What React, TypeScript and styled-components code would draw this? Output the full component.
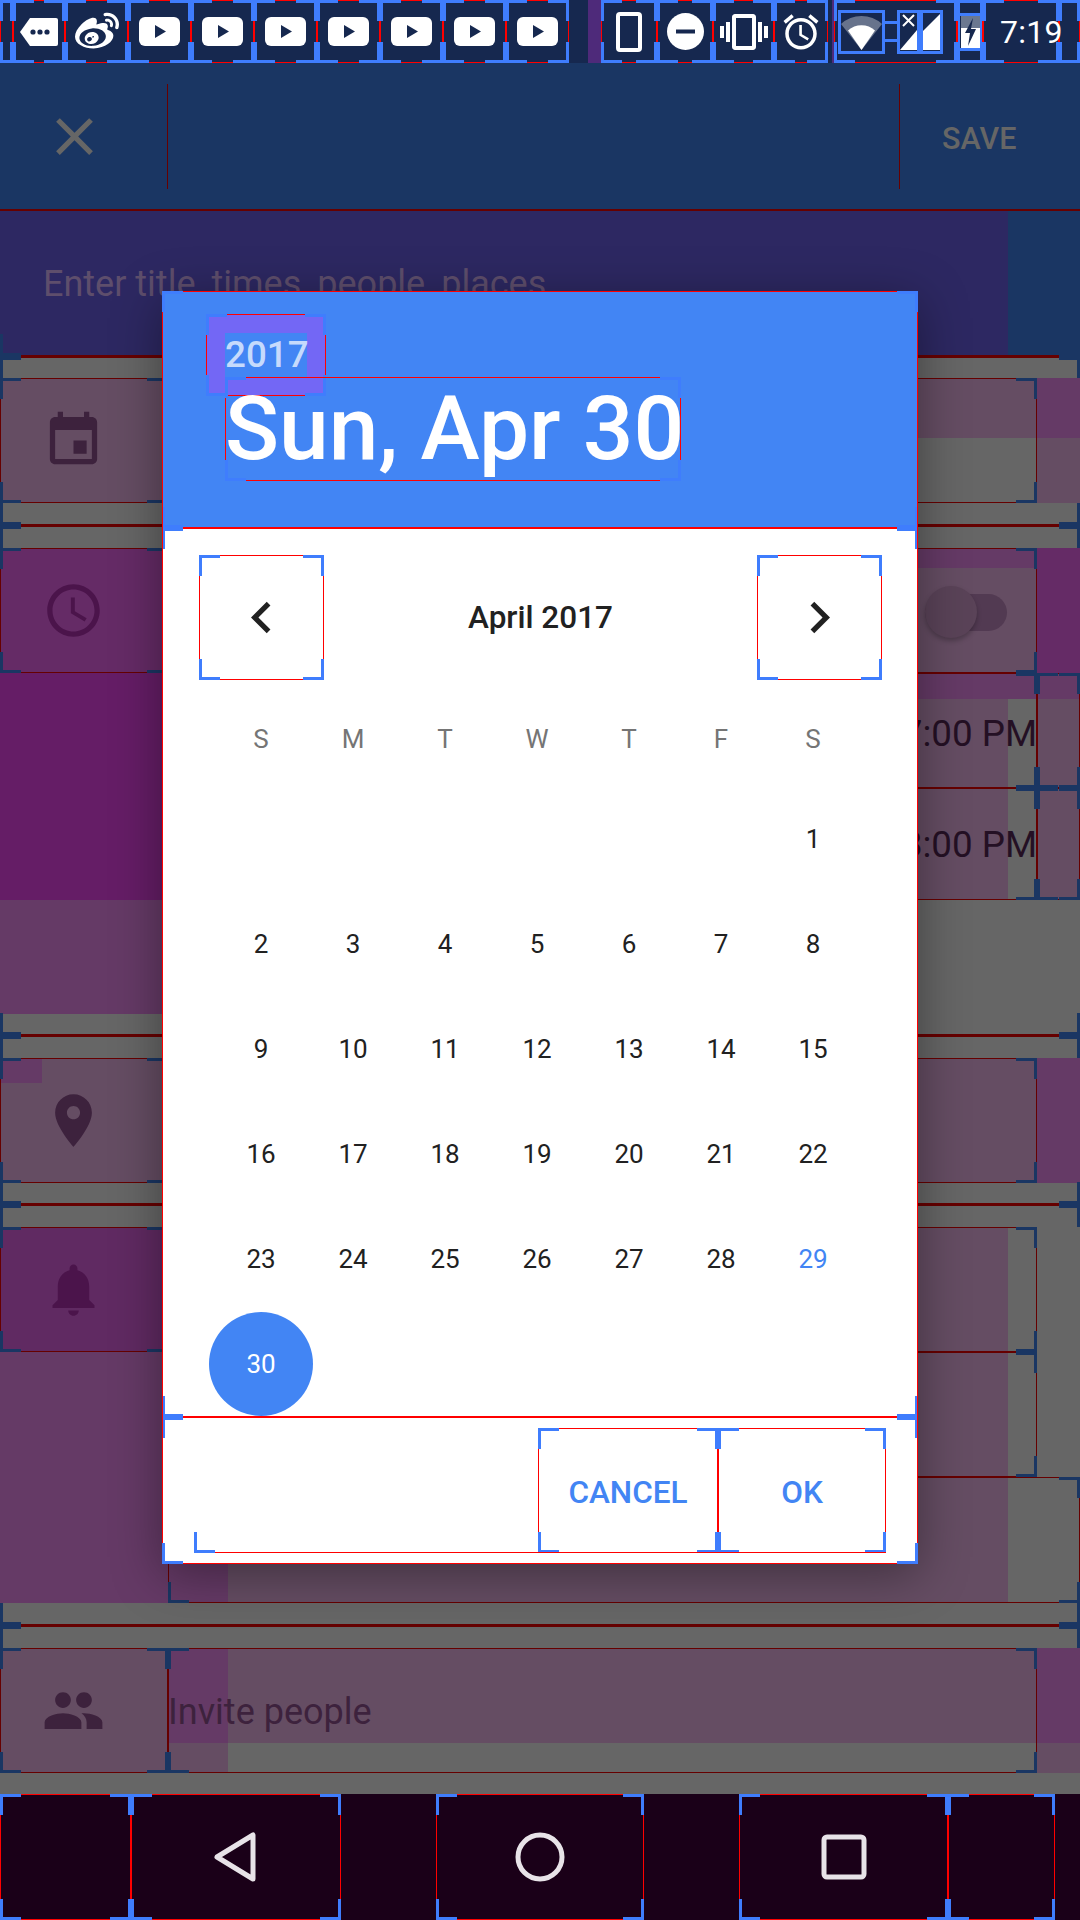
import * as React from 'react';
import styled, { createGlobalStyle, css } from 'styled-components';
import { FaWeibo } from 'react-icons/fa';

const BLUE = '#4285f4';
const PINK = '#654d63';
const PLUM = '#653a66';
const VIOLET = '#652b66';
const DEEP = '#651d66';
const GREY = '#666666';
const INK = '#3d223d';
const NAVY = '#1a3663';
const DARK_RED = '#660000';

const WEEK = ['S', 'M', 'T', 'W', 'T', 'F', 'S'];
const DAYS = Array.from({ length: 36 }, (_, i) => (i < 6 ? 0 : i - 5));

const PATHS = {
  event: 'M17 12h-5v5h5v-5zM16 1v2H8V1H6v2H5c-1.11 0-1.99.9-1.99 2L3 19c0 1.1.89 2 2 2h14c1.1 0 2-.9 2-2V5c0-1.1-.9-2-2-2h-1V1h-2zm3 18H5V8h14v11z',
  clock: 'M11.99 2C6.47 2 2 6.48 2 12s4.47 10 9.99 10C17.52 22 22 17.52 22 12S17.52 2 11.99 2zM12 20c-4.42 0-8-3.58-8-8s3.58-8 8-8 8 3.58 8 8-3.58 8-8 8zm.5-13H11v6l5.25 3.15.75-1.23-4.5-2.67z',
  place: 'M12 2C8.13 2 5 5.13 5 9c0 5.25 7 13 7 13s7-7.75 7-13c0-3.87-3.13-7-7-7zm0 9.5c-1.38 0-2.5-1.12-2.5-2.5s1.12-2.5 2.5-2.5 2.5 1.12 2.5 2.5-1.12 2.5-2.5 2.5z',
  bell: 'M12 22c1.1 0 2-.9 2-2h-4c0 1.1.89 2 2 2zm6-6v-5c0-3.07-1.64-5.64-4.5-6.32V4c0-.83-.67-1.5-1.5-1.5s-1.5.67-1.5 1.5v.68C7.63 5.36 6 7.92 6 11v5l-2 2v1h16v-1l-2-2z',
  people: 'M16 11c1.66 0 2.99-1.34 2.99-3S17.66 5 16 5c-1.66 0-3 1.34-3 3s1.34 3 3 3zm-8 0c1.66 0 2.99-1.34 2.99-3S9.66 5 8 5C6.34 5 5 6.34 5 8s1.34 3 3 3zm0 2c-2.33 0-7 1.17-7 3.5V19h14v-2.5c0-2.33-4.67-3.5-7-3.5zm8 0c-.29 0-.62.02-.97.05 1.16.84 1.97 1.97 1.97 3.45V19h6v-2.5c0-2.33-4.67-3.5-7-3.5z',
  close: 'M19 6.41L17.59 5 12 10.59 6.41 5 5 6.41 10.59 12 5 17.59 6.41 19 12 13.41 17.59 19 19 17.59 13.41 12z',
  left: 'M15.41 7.41L14 6l-6 6 6 6 1.41-1.41L10.83 12z',
  right: 'M8.59 16.59L10 18l6-6-6-6-1.41 1.41L13.17 12z',
  vibrate: 'M0 15h2V9H0v6zm3 2h2V7H3v10zm19-8v6h2V9h-2zm-3 8h2V7h-2v10zM16.5 3h-9C6.67 3 6 3.67 6 4.5v15c0 .83.67 1.5 1.5 1.5h9c.83 0 1.5-.67 1.5-1.5v-15c0-.83-.67-1.5-1.5-1.5zM16 19H8V5h8v14z',
  alarm: 'M22 5.72l-4.6-3.86-1.29 1.53 4.6 3.86L22 5.72zM7.88 3.39L6.6 1.86 2 5.71l1.29 1.53 4.59-3.85zM12.5 8H11v6l4.75 2.85.75-1.23-4-2.37V8zM12 4c-4.97 0-9 4.03-9 9s4.03 9 9 9 9-4.03 9-9-4.03-9-9-9zm0 16c-3.87 0-7-3.13-7-7s3.13-7 7-7 7 3.13 7 7-3.13 7-7 7z',
};

const Icon = ({ name, size, color }: { name: keyof typeof PATHS; size: number; color: string }) => (
  <svg width={size} height={size} viewBox="0 0 24 24" fill={color}>
    <path d={PATHS[name]} />
  </svg>
);

// layout bound marks from the "show layout bounds" developer option
const marks = (c: string, line: string, l = 21, t = 3) => {
  const m = `linear-gradient(${c}, ${c})`;
  const r = `linear-gradient(${line}, ${line})`;
  return css`
    background-image: ${m}, ${m}, ${m}, ${m}, ${m}, ${m}, ${m}, ${m}, ${r}, ${r}, ${r}, ${r};
    background-repeat: no-repeat;
    background-size: ${l}px ${t}px, ${t}px ${l}px, ${l}px ${t}px, ${t}px ${l}px, ${l}px ${t}px, ${t}px ${l}px,
      ${l}px ${t}px, ${t}px ${l}px, 100% 1px, 100% 1px, 1px 100%, 1px 100%;
    background-position: 0 0, 0 0, 100% 0, 100% 0, 0 100%, 0 100%, 100% 100%, 100% 100%, 0 0, 0 100%, 0 0, 100% 0;
  `;
};

const Bounds = styled.div<{ $dim?: boolean; $fill?: string }>`
  position: relative;
  ${(p) => p.$fill && `background: ${p.$fill};`}

  &::after {
    content: '';
    position: absolute;
    inset: 0;
    pointer-events: none;
    ${(p) => (p.$dim ? marks(NAVY, DARK_RED) : marks('#3f7dfd', '#ff0000'))}
  }
`;

const GlobalStyle = createGlobalStyle`
  html, body {
    margin: 0;
    padding: 0;
    background: #666;
  }
  body {
    font-family: Roboto, "Liberation Sans", sans-serif;
  }
`;

const Page = styled.div`
  position: relative;
  width: 1080px;
  height: 1920px;
  overflow: hidden;
  display: flex;
  flex-direction: column;
  background: ${GREY};
`;

const StatusBar = styled.div`
  height: 63px;
  flex: none;
  display: flex;
  background: #16284f;
`;

const StatusCell = styled(Bounds)<{ $w: number; $pad?: number }>`
  width: ${(p) => p.$w}px;
  height: 63px;
  flex: none;
  display: flex;
  align-items: center;
  justify-content: ${(p) => (p.$pad ? 'flex-start' : 'center')};
  padding-left: ${(p) => p.$pad ?? 0}px;
  box-sizing: border-box;
`;

const Sliver = styled.div<{ $w: number }>`
  width: ${(p) => p.$w}px;
  flex: none;
  background: linear-gradient(90deg, #16284f 60%, #4e2a7a 60%);
`;

const SystemGroup = styled(Bounds)`
  width: 123px;
  height: 63px;
  flex: none;
  display: flex;
  align-items: center;
  padding-left: 4px;
  box-sizing: border-box;
`;

const BoxedIcon = styled.div<{ $w: number; $h?: number }>`
  width: ${(p) => p.$w}px;
  height: ${(p) => p.$h ?? 44}px;
  flex: none;
  box-sizing: border-box;
  border: 3px solid #3f7dfd;
  display: flex;
  align-items: center;
  justify-content: center;
`;

const BoxLink = styled.div`
  width: 12px;
  height: 15px;
  flex: none;
  border-top: 3px solid #3f7dfd;
  border-bottom: 3px solid #3f7dfd;
`;

const Clock = styled.span`
  position: relative;
  z-index: 1;
  font-size: 32px;
  font-weight: 400;
  color: #fff;
  letter-spacing: 0.3px;
`;

const Toolbar = styled.div`
  height: 148px;
  flex: none;
  display: flex;
  align-items: center;
  background: ${NAVY};
  border-bottom: 2px solid ${DARK_RED};
  box-sizing: border-box;
`;

const CloseButton = styled.div`
  width: 167px;
  display: flex;
  justify-content: center;
  padding-right: 19px;
  box-sizing: border-box;
`;

const TitleField = styled(Bounds)`
  flex: 1;
  height: 105px;

  &::after {
    background: linear-gradient(${DARK_RED}, ${DARK_RED}) 0 0 / 1px 100% no-repeat,
      linear-gradient(${DARK_RED}, ${DARK_RED}) 100% 0 / 1px 100% no-repeat;
  }
`;

const SaveButton = styled.div`
  width: 180px;
  padding: 4px 0 0 42px;
  box-sizing: border-box;
  font-size: 30.5px;
  font-weight: 500;
  color: #666;
`;

const TitleBand = styled.div`
  height: 144px;
  flex: none;
  display: flex;
  background: ${NAVY};
`;

const TitleFill = styled.div`
  width: 1008px;
  box-sizing: border-box;
  padding: 50px 0 0 43px;
  background: #2d2862;
  font-size: 36px;
  line-height: 46px;
  color: #5e4e6c;
`;

const Section = styled.div<{ $pad?: number }>`
  display: flex;
  flex-direction: column;
  flex: none;
  padding-top: ${(p) => p.$pad ?? 21}px;
  position: relative;
`;

const Divider = styled.div`
  height: 3px;
  flex: none;
  position: relative;
  background: ${DARK_RED};

  &::before,
  &::after {
    content: '';
    position: absolute;
    top: -21px;
    width: 21px;
    height: 45px;
    background-repeat: no-repeat;
    background-image: linear-gradient(${NAVY}, ${NAVY}), linear-gradient(${NAVY}, ${NAVY});
    background-size: 100% 7px, 3px 100%;
  }
  &::before {
    left: 0;
    background-position: 0 19px, 0 0;
  }
  &::after {
    right: 0;
    background-position: 0 19px, 100% 0;
  }
`;

const Row = styled.div<{ $h?: number }>`
  display: grid;
  grid-template-columns: 168px 869px 43px;
  height: ${(p) => p.$h ?? 125}px;
`;

const Spacer = styled.div<{ $h: number }>`
  height: ${(p) => p.$h}px;
  flex: none;
`;

const IconCell = styled(Bounds)`
  display: flex;
  align-items: center;
  justify-content: center;
  padding-right: 21px;
`;

const Patch = styled.div`
  position: absolute;
  left: 0;
  top: 0;
  width: 42px;
  height: 25px;
  background: ${PLUM};
`;

const Strip = styled.div<{ $fill: string }>`
  background: ${(p) => p.$fill};
`;

const TimeColumn = styled.div`
  display: flex;
  flex-direction: column;
`;

const TimeCell = styled(Bounds)<{ $h: number; $nudge?: number }>`
  height: ${(p) => p.$h}px;
  box-sizing: border-box;
  padding-top: ${(p) => p.$nudge ?? 0}px;
  display: flex;
  align-items: center;
  justify-content: flex-end;
  font-size: 36.75px;
  color: #241024;
`;

const BlankBlock = styled.div<{ $h: number; $fill: string }>`
  height: ${(p) => p.$h}px;
  flex: none;
  background: ${(p) => p.$fill};
`;

const LowerGrid = styled.div`
  display: grid;
  grid-template-columns: 168px 869px 43px;
  grid-template-rows: 125px 126px;
`;

const LowerFill = styled(Bounds)<{ $wide?: boolean }>`
  grid-column: ${(p) => (p.$wide ? '2 / 4' : '2')};
  background: linear-gradient(90deg, ${PLUM} 60px, ${PINK} 60px, ${PINK} 840px, ${GREY} 840px);
`;

const LowerLeft = styled.div`
  grid-row: 1 / 3;
  background: ${PLUM};
`;

const Switch = styled.div`
  position: absolute;
  right: 30px;
  top: 46px;
  width: 82px;
  height: 37px;
  border-radius: 19px;
  background: #523a52;
`;

const Thumb = styled.div`
  position: absolute;
  left: 0;
  top: -8px;
  width: 52px;
  height: 52px;
  border-radius: 50%;
  background: #5a4358;
  box-shadow: 0 3px 5px rgba(0, 0, 0, 0.25);
`;

const InviteText = styled.span`
  position: absolute;
  left: 0;
  top: 44px;
  font-size: 36px;
  line-height: 40px;
  color: ${INK};
`;

const NavBar = styled.div`
  flex: 1;
  display: flex;
  background: #1a0018;
`;

const NavKey = styled(Bounds)<{ $w: number; $ml?: number }>`
  width: ${(p) => p.$w}px;
  margin-left: ${(p) => p.$ml ?? 0}px;
  flex: none;
  display: flex;
  align-items: center;
  justify-content: center;
`;

const Dialog = styled(Bounds)`
  position: absolute;
  left: 162px;
  top: 291px;
  width: 756px;
  height: 1273px;
  display: flex;
  flex-direction: column;
  background: #fff;
  border-radius: 3px;
  box-shadow: 0 10px 50px rgba(0, 0, 0, 0.38);
`;

const Header = styled(Bounds)`
  height: 237px;
  flex: none;
  box-sizing: border-box;
  padding: 23px 0 0 44px;
  background: ${BLUE};
`;

const YearBox = styled(Bounds)`
  width: 120px;
  height: 82px;
  box-sizing: border-box;
  padding: 19px 0 0 19px;
  background: #7367f5;
`;

const YearText = styled.div`
  width: 82px;
  height: 44px;
  background: ${BLUE};
  font-size: 36.75px;
  font-weight: 500;
  line-height: 44px;
  color: #c6dafc;
`;

const DateText = styled(Bounds)`
  width: 456px;
  height: 104px;
  margin: -19px 0 0 19px;
  font-size: 89.25px;
  font-weight: 500;
  line-height: 104px;
  color: #fff;
  white-space: nowrap;
`;

const Body = styled(Bounds)`
  flex: 1;
  box-sizing: border-box;
  padding-top: 27px;
  display: flex;
  flex-direction: column;
`;

const MonthRow = styled.div`
  display: flex;
  align-items: center;
  justify-content: space-between;
  padding: 0 36px 0 37px;
`;

const ArrowButton = styled(Bounds)`
  width: 125px;
  height: 125px;
  display: flex;
  align-items: center;
  justify-content: center;
`;

const MonthTitle = styled.div`
  font-size: 31.5px;
  font-weight: 500;
  color: #212121;
`;

const WeekRow = styled.div`
  display: grid;
  grid-template-columns: repeat(7, 92px);
  height: 106px;
  box-sizing: border-box;
  padding: 12px 0 0 53px;
  align-items: center;
`;

const WeekDay = styled.div`
  text-align: center;
  font-size: 26px;
  color: #757575;
`;

const DayGrid = styled.div`
  display: grid;
  grid-template-columns: repeat(7, 92px);
  grid-auto-rows: 105px;
  padding-left: 53px;
`;

const Day = styled.div<{ $today?: boolean; $selected?: boolean }>`
  display: flex;
  align-items: center;
  justify-content: center;
  font-size: 26px;
  color: ${(p) => (p.$selected ? '#fff' : p.$today ? BLUE : '#212121')};

  ${(p) =>
    p.$selected &&
    css`
      width: 104px;
      height: 104px;
      margin: 1px 0 0 -6px;
      border-radius: 50%;
      background: ${BLUE};
    `}
`;

const Footer = styled(Bounds)`
  height: 147px;
  flex: none;
  box-sizing: border-box;
  padding: 11px 32px;
`;

const ButtonBar = styled(Bounds)`
  height: 125px;
  display: flex;
  justify-content: flex-end;

  &::after {
    background: linear-gradient(#3f7dfd, #3f7dfd) 0 100% / 21px 3px no-repeat,
      linear-gradient(#3f7dfd, #3f7dfd) 0 100% / 3px 21px no-repeat,
      linear-gradient(#ff0000, #ff0000) 0 100% / 100% 1px no-repeat;
  }
`;

const TextButton = styled(Bounds)<{ $w: number }>`
  width: ${(p) => p.$w}px;
  box-sizing: border-box;
  padding-top: 4px;
  display: flex;
  align-items: center;
  justify-content: center;
  font-size: 31.5px;
  font-weight: 500;
  color: ${BLUE};
`;

const YouTube = () => (
  <svg width="41" height="30" viewBox="0 0 41 30">
    <rect x="0" y="0" width="41" height="29" rx="6" fill="#fff" />
    <path d="M16 8l11 6.5-11 6.5z" fill="#16284f" />
  </svg>
);

const ChatTag = () => (
  <svg width="38" height="28" viewBox="0 0 38 28">
    <path d="M10 0h26a2 2 0 0 1 2 2v24a2 2 0 0 1-2 2H10L0 14z" fill="#fff" />
    <circle cx="13" cy="14" r="2.6" fill="#16284f" />
    <circle cx="20" cy="14" r="2.6" fill="#16284f" />
    <circle cx="27" cy="14" r="2.6" fill="#16284f" />
  </svg>
);

const Phone = () => (
  <svg width="26" height="40" viewBox="0 0 26 40">
    <rect x="2" y="2" width="22" height="36" rx="2" fill="none" stroke="#fff" strokeWidth="4" />
  </svg>
);

const DoNotDisturb = () => (
  <svg width="37" height="37" viewBox="0 0 37 37">
    <circle cx="18.5" cy="18.5" r="18.5" fill="#fff" />
    <rect x="9" y="16.5" width="19" height="4" fill="#16284f" />
  </svg>
);

const Wifi = () => (
  <svg width="41" height="37" viewBox="0 0 41 37">
    <path d="M0 11a30 30 0 0 1 41 0L20.5 37z" fill="#fff" fillOpacity="0.35" />
    <path d="M7 17.500a20 20 0 0 1 27 0L20.500 37z" fill="#fff" />
  </svg>
);

const SignalLeft = () => (
  <svg width="17" height="36" viewBox="0 0 17 36">
    <path d="M17 16v20H0z" fill="#fff" />
    <path d="M3 1l11 11M14 1L3 12" stroke="#fff" strokeWidth="2" />
  </svg>
);

const SignalRight = () => (
  <svg width="17" height="36" viewBox="0 0 17 36">
    <path d="M17 0v36H0V17z" fill="#fff" />
  </svg>
);

const Battery = () => (
  <svg width="19" height="32" viewBox="0 0 19 32">
    <rect width="19" height="32" fill="#fff" />
    <rect width="19" height="12" fill="#6b7890" />
    <path d="M12 2L4 17h5l-2 13 8-17h-5z" fill="#16284f" />
  </svg>
);

const NavBack = () => (
  <svg width="48" height="52" viewBox="0 0 48 52">
    <path d="M41 4v44L5 26z" fill="none" stroke="#e8e3e8" strokeWidth="5" strokeLinejoin="round" />
  </svg>
);

const NavHome = () => (
  <svg width="52" height="52" viewBox="0 0 52 52">
    <circle cx="26" cy="26" r="22" fill="none" stroke="#e8e3e8" strokeWidth="5" />
  </svg>
);

const NavRecents = () => (
  <svg width="46" height="46" viewBox="0 0 46 46">
    <rect x="3" y="3" width="40" height="40" rx="3" fill="none" stroke="#e8e3e8" strokeWidth="5" />
  </svg>
);

const App = () => (
  <Page>
    <GlobalStyle />
    <StatusBar>
      <StatusCell $w={13} />
      <StatusCell $w={52}><ChatTag /></StatusCell>
      <StatusCell $w={63}><FaWeibo size={44} color="#fff" /></StatusCell>
      {[0, 1, 2, 3, 4, 5, 6].map((i) => (
        <StatusCell $w={63} key={i}><YouTube /></StatusCell>
      ))}
      <Sliver $w={32} />
      <StatusCell $w={56}><Phone /></StatusCell>
      <StatusCell $w={56}><DoNotDisturb /></StatusCell>
      <StatusCell $w={61}><Icon name="vibrate" size={48} color="#fff" /></StatusCell>
      <StatusCell $w={54}><Icon name="alarm" size={42} color="#fff" /></StatusCell>
      <Sliver $w={6} />
      <SystemGroup>
        <BoxedIcon $w={47}><Wifi /></BoxedIcon>
        <BoxLink />
        <BoxedIcon $w={23}><SignalLeft /></BoxedIcon>
        <BoxedIcon $w={23}><SignalRight /></BoxedIcon>
      </SystemGroup>
      <StatusCell $w={26}><BoxedIcon $w={26} $h={38}><Battery /></BoxedIcon></StatusCell>
      <StatusCell $w={76} $pad={17}><Clock>7:19</Clock></StatusCell>
      <StatusCell $w={21} />
    </StatusBar>

    <Toolbar>
      <CloseButton><Icon name="close" size={63} color="#666" /></CloseButton>
      <TitleField $dim />
      <SaveButton>SAVE</SaveButton>
    </Toolbar>

    <TitleBand>
      <TitleFill>Enter title, times, people, places</TitleFill>
    </TitleBand>

    <Divider />
    <Section $pad={20}>
      <Row>
        <IconCell $dim $fill={PINK}><Icon name="event" size={63} color={INK} /></IconCell>
        <Bounds $dim $fill={`linear-gradient(${PINK} 60px, ${GREY} 60px)`} />
        <Strip $fill={`linear-gradient(${PLUM} 60px, ${PINK} 60px)`} />
      </Row>
      <Spacer $h={21} />
    </Section>

    <Divider />
    <Section>
      <Row>
        <IconCell $dim $fill={VIOLET}><Icon name="clock" size={63} color="#4b144b" /></IconCell>
        <Bounds $dim $fill={`linear-gradient(${PLUM} 20px, ${PINK} 20px)`}>
          <Switch><Thumb /></Switch>
        </Bounds>
        <Strip $fill={VIOLET} />
      </Row>
      <Row $h={227}>
        <Strip $fill={DEEP} />
        <TimeColumn>
          <TimeCell $dim $h={115} $nudge={6} $fill={`linear-gradient(${PLUM} 26px, transparent 26px), linear-gradient(90deg, ${PINK} 840px, ${GREY} 840px)`}>7:00 PM</TimeCell>
          <TimeCell $dim $h={112} $fill={`linear-gradient(90deg, ${PINK} 840px, ${GREY} 840px)`}>8:00 PM</TimeCell>
        </TimeColumn>
        <TimeColumn>
          <TimeCell $dim $h={115} $fill={`linear-gradient(${PLUM} 26px, ${PINK} 26px)`} />
          <TimeCell $dim $h={112} $fill={PINK} />
        </TimeColumn>
      </Row>
      <BlankBlock $h={114} $fill={`linear-gradient(90deg, ${PLUM} 500px, ${GREY} 500px)`} />
      <Spacer $h={20} />
    </Section>

    <Divider />
    <Section>
      <Row>
        <IconCell $dim $fill={PINK}><Patch /><Icon name="place" size={63} color={INK} /></IconCell>
        <Bounds $dim $fill={PINK} />
        <Strip $fill={PLUM} />
      </Row>
      <Spacer $h={20} />
    </Section>

    <Divider />
    <Section>
      <Row>
        <IconCell $dim $fill="#602a62"><Icon name="bell" size={63} color="#4b144b" /></IconCell>
        <Bounds $dim $fill={`linear-gradient(90deg, ${PINK} 840px, ${GREY} 840px)`} />
        <Strip $fill={GREY} />
      </Row>
      <LowerGrid>
        <LowerLeft />
        <LowerFill $dim />
        <Strip $fill={GREY} />
        <LowerFill $dim $wide />
      </LowerGrid>
      <Spacer $h={21} />
    </Section>

    <Divider />
    <Section>
      <Row>
        <IconCell $dim $fill={PINK}><Icon name="people" size={63} color={INK} /></IconCell>
        <Bounds $dim $fill={`linear-gradient(90deg, ${PLUM} 60px, transparent 60px) 0 0 / 100% 95px no-repeat, linear-gradient(${PINK} 95px, transparent 95px), linear-gradient(90deg, ${PINK} 60px, ${GREY} 60px)`}>
          <InviteText>Invite people</InviteText>
        </Bounds>
        <Strip $fill={`linear-gradient(${PLUM} 95px, ${PINK} 95px)`} />
      </Row>
      <Spacer $h={21} />
    </Section>

    <NavBar>
      <NavKey $w={131} />
      <NavKey $w={210}><NavBack /></NavKey>
      <NavKey $w={208} $ml={95}><NavHome /></NavKey>
      <NavKey $w={209} $ml={95}><NavRecents /></NavKey>
      <NavKey $w={107} />
    </NavBar>

    <Dialog>
      <Header>
        <YearBox><YearText>2017</YearText></YearBox>
        <DateText>Sun, Apr 30</DateText>
      </Header>
      <Body>
        <MonthRow>
          <ArrowButton><Icon name="left" size={63} color="#212121" /></ArrowButton>
          <MonthTitle>April 2017</MonthTitle>
          <ArrowButton><Icon name="right" size={63} color="#212121" /></ArrowButton>
        </MonthRow>
        <WeekRow>
          {WEEK.map((d, i) => (
            <WeekDay key={i}>{d}</WeekDay>
          ))}
        </WeekRow>
        <DayGrid>
          {DAYS.map((d, i) => (
            <Day key={i} $today={d === 29} $selected={d === 30}>{d > 0 ? d : ''}</Day>
          ))}
        </DayGrid>
      </Body>
      <Footer>
        <ButtonBar>
          <TextButton $w={180}>CANCEL</TextButton>
          <TextButton $w={168}>OK</TextButton>
        </ButtonBar>
      </Footer>
    </Dialog>
  </Page>
);

export default App;
